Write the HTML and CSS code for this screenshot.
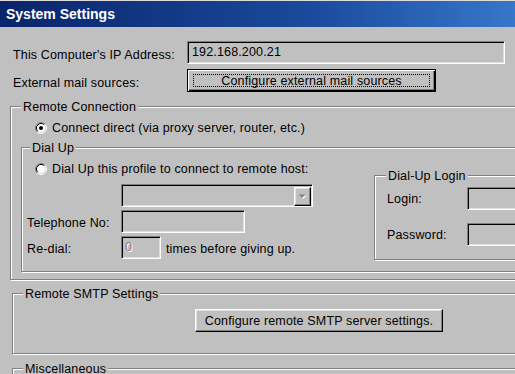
FILE: index.html
```html
<!DOCTYPE html>
<html>
<head>
<meta charset="utf-8">
<link rel="stylesheet" href="styles.css">
</head>
<body>
<div class="window">
  <div class="titlebar">System Settings</div>
  <div class="top-grid">
    <div class="lbl">This Computer's IP Address:</div>
    <div class="field ip">192.168.200.21</div>
    <div class="lbl">External mail sources:</div>
    <div><div class="btn default mail-btn"><span class="focus">Configure external mail sources</span></div></div>
  </div>

  <div class="group g-remote">
    <div class="legend">Remote Connection</div>
    <div class="radio-row r-direct">
      <svg class="radio" width="12" height="12" viewBox="0 0 12 12">
        <circle cx="6" cy="6" r="4.5" fill="#fff"/>
        <path d="M2.11 9.89A5.5 5.5 0 0 1 9.89 2.11" fill="none" stroke="#808080"/>
        <path d="M9.89 2.11A5.5 5.5 0 0 1 2.11 9.89" fill="none" stroke="#fff"/>
        <path d="M2.82 9.18A4.5 4.5 0 0 1 9.18 2.82" fill="none" stroke="#000"/>
        <path d="M9.18 2.82A4.5 4.5 0 0 1 2.82 9.18" fill="none" stroke="#dfdfdf"/>
        <circle cx="6" cy="6" r="2" fill="#000"/>
      </svg>
      <span>Connect direct (via proxy server, router, etc.)</span>
    </div>

    <div class="group g-dialup">
      <div class="legend">Dial Up</div>
      <div class="dial-cols">
        <div class="dial-left">
          <div class="radio-row r-dial">
            <svg class="radio" width="12" height="12" viewBox="0 0 12 12">
              <circle cx="6" cy="6" r="4.5" fill="#fff"/>
              <path d="M2.11 9.89A5.5 5.5 0 0 1 9.89 2.11" fill="none" stroke="#808080"/>
              <path d="M9.89 2.11A5.5 5.5 0 0 1 2.11 9.89" fill="none" stroke="#fff"/>
              <path d="M2.82 9.18A4.5 4.5 0 0 1 9.18 2.82" fill="none" stroke="#000"/>
              <path d="M9.18 2.82A4.5 4.5 0 0 1 2.82 9.18" fill="none" stroke="#dfdfdf"/>
            </svg>
            <span>Dial Up this profile to connect to remote host:</span>
          </div>
          <div class="field combo">
            <div class="btn combo-btn">
              <svg width="9" height="6" viewBox="0 0 9 6">
                <polygon points="1.5,1.5 8.5,1.5 5,5" fill="#fff"/>
                <polygon points="0.5,0.5 7.5,0.5 4,4" fill="#808080"/>
              </svg>
            </div>
          </div>
          <div class="frow tel-row">
            <div class="flbl">Telephone No:</div>
            <div class="field tel"></div>
          </div>
          <div class="frow redial-row">
            <div class="flbl">Re-dial:</div>
            <div class="field redial"><span class="disabled">0</span></div>
            <span class="after">times before giving up.</span>
          </div>
        </div>
        <div class="group g-login">
          <div class="legend">Dial-Up Login</div>
          <div class="frow login-row">
            <div class="llbl">Login:</div>
            <div class="field login"></div>
          </div>
          <div class="frow pass-row">
            <div class="llbl">Password:</div>
            <div class="field login"></div>
          </div>
        </div>
      </div>
    </div>
  </div>

  <div class="group g-smtp">
    <div class="legend">Remote SMTP Settings</div>
    <div class="btn smtp-btn">Configure remote SMTP server settings.</div>
  </div>

  <div class="group g-misc">
    <div class="legend">Miscellaneous</div>
    <div class="misc-space"></div>
  </div>
</div>
</body>
</html>
```

FILE: styles.css
```css
html, body {
  margin: 0;
  padding: 0;
  background: #c0c0c0;
  overflow: hidden;
}

.window {
  width: 560px;
  font-family: "Liberation Sans", Arial, sans-serif;
  font-size: 12.5px;
  letter-spacing: 0.15px;
  line-height: 14px;
  color: #000;
}

.titlebar {
  height: 26px;
  border-top: 1px solid #dcdcdc;
  background: linear-gradient(to right, #0a246a 0%, #1a4a9c 55%, #3d80d4 100%);
  color: #fff;
  font-weight: bold;
  font-size: 14px;
  letter-spacing: 0;
  line-height: 26px;
  padding-left: 6px;
}

.top-grid {
  display: grid;
  grid-template-columns: 174px auto;
  row-gap: 5px;
  margin-top: 14px;
  padding-left: 13px;
}

.lbl {
  padding-top: 7px;
}

.field {
  box-sizing: border-box;
  height: 23px;
  border: 1px solid;
  border-color: #808080 #fff #fff #808080;
  box-shadow: inset 1px 1px 0 #000, inset -1px -1px 0 #dfdfdf;
  background: #c0c0c0;
}

.ip {
  width: 318px;
  padding: 3px 4px;
}

.btn {
  box-sizing: border-box;
  height: 23px;
  background: #c0c0c0;
  border: 1px solid;
  border-color: #fff #000 #000 #fff;
  box-shadow: inset -1px -1px 0 #808080, inset 1px 1px 0 #dfdfdf;
  display: flex;
  align-items: center;
  justify-content: center;
}

.btn.default {
  border-color: #000;
  box-shadow: inset 1px 1px 0 #fff, inset -1px -1px 0 #000, inset -2px -2px 0 #808080;
  padding: 4px 5px 4px 5px;
}

.mail-btn {
  width: 249px;
}

.focus {
  flex: 1;
  align-self: stretch;
  border: 1px dotted #000;
  display: flex;
  align-items: center;
  justify-content: center;
}

.group {
  border: 1px solid #808080;
  box-shadow: inset 1px 1px 0 #fff, 1px 1px 0 #fff;
}

.legend {
  display: table;
  background: #c0c0c0;
  padding: 0 2px;
  margin-top: -7px;
  margin-left: 10px;
  height: 14px;
}

.g-remote {
  margin-top: 14px;
  margin-left: 10px;
  width: 540px;
  padding-bottom: 7px;
}

.radio-row {
  display: flex;
  align-items: center;
  height: 14px;
}

.radio {
  flex: none;
  margin-right: 5px;
}

.r-direct {
  margin-top: 7px;
  padding-left: 24px;
}

.g-dialup {
  margin-top: 12px;
  margin-left: 10px;
  padding-bottom: 11px;
}

.g-dialup > .legend {
  margin-left: 8px;
}

.dial-cols {
  display: flex;
  margin-top: 7px;
}

.dial-left {
  flex: none;
  width: 352px;
}

.r-dial {
  padding-left: 13px;
}

.combo {
  width: 192px;
  margin-top: 8px;
  margin-left: 99px;
  display: flex;
  justify-content: flex-end;
  padding: 2px 1px 1px 2px;
}

.combo-btn {
  width: 17px;
  height: 19px;
  flex: none;
  padding-top: 1px;
}

.frow {
  display: flex;
  align-items: center;
}

.tel-row, .redial-row {
  margin-top: 3px;
  padding-left: 5px;
}

.flbl {
  width: 94px;
  padding-top: 2px;
}

.tel {
  width: 124px;
}

.redial {
  width: 40px;
  padding: 3px 3px;
}

.disabled {
  color: #808080;
  text-shadow: 1px 1px 0 #fff;
}

.after {
  margin-left: 5px;
  padding-top: 2px;
}

.g-login {
  flex: 1;
  margin-top: 13px;
  padding-left: 12px;
  padding-bottom: 13px;
}

.g-login > .legend {
  margin-left: -1px;
}

.login-row {
  margin-top: 4px;
}

.pass-row {
  margin-top: 13px;
}

.llbl {
  width: 80px;
  padding-top: 1px;
}

.login {
  width: 80px;
}

.g-smtp {
  margin-top: 13px;
  margin-left: 12px;
  width: 540px;
  padding-bottom: 21px;
}

.smtp-btn {
  width: 248px;
  margin-top: 8px;
  margin-left: 182px;
}

.g-misc {
  margin-top: 14px;
  margin-left: 12px;
  width: 540px;
}

.misc-space {
  height: 40px;
}
```
